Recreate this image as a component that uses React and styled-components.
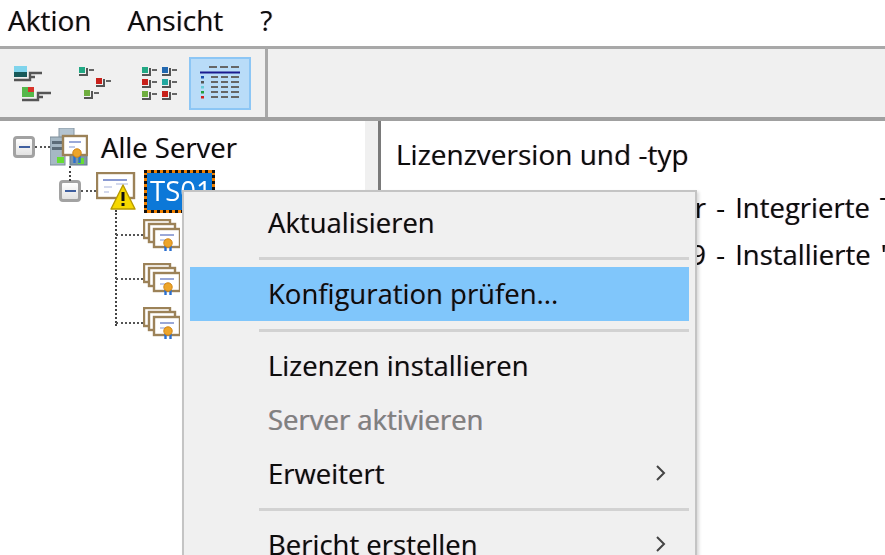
import React from "react";
import styled, { createGlobalStyle } from "styled-components";

const GlobalStyle = createGlobalStyle`
  html, body {
    margin: 0;
    height: 100%;
    overflow: hidden;
    background: #fff;
  }
  #root {
    height: 555px;
    filter: blur(0.55px);
  }
`;

const fringe = `text-shadow: -0.7px 0 rgba(255, 90, 0, 0.4), 0.7px 0 rgba(0, 110, 255, 0.4);`;

const Window = styled.div`
  position: relative;
  width: 885px;
  height: 555px;
  overflow: hidden;
  display: flex;
  flex-direction: column;
  font-family: "Open Sans", "Noto Sans", sans-serif;
  font-size: 27.5px;
  color: #0c0c0c;
`;

const MenuBar = styled.div`
  height: 49px;
  flex: none;
  box-sizing: border-box;
  display: flex;
  align-items: flex-start;
  padding-left: 8px;
  background: #fff;
  border-bottom: 3px solid #a8a8a8;
`;

const MenuTitle = styled.span`
  font-size: 28px;
  line-height: 41px;
  margin-right: ${(p) => p.$gap || 0}px;
  ${fringe}
`;

const Toolbar = styled.div`
  height: 72px;
  flex: none;
  box-sizing: border-box;
  display: flex;
  align-items: center;
  background: #f0f0f0;
  border-bottom: 4px solid #a0a0a0;
  padding-left: 13px;
`;

const ToolButton = styled.div`
  width: ${(p) => (p.$active ? "62px" : "42px")};
  height: 53px;
  margin-right: ${(p) => p.$gap || 0}px;
  box-sizing: border-box;
  display: flex;
  align-items: center;
  justify-content: center;
  background: ${(p) => (p.$active ? "#b9dcf8" : "transparent")};
  border: ${(p) => (p.$active ? "2px solid #8cc6f5" : "none")};
`;

const ToolDivider = styled.div`
  width: 3px;
  align-self: stretch;
  margin-left: 14px;
  background: #a8a8a8;
`;

const Panes = styled.div`
  flex: 1;
  display: flex;
  min-height: 0;
`;

const TreePane = styled.div`
  width: 365px;
  flex: none;
  box-sizing: border-box;
  padding-top: 4px;
  background: #fff;
`;

const Splitter = styled.div`
  width: 13px;
  flex: none;
  background: #f0f0f0;
`;

const DetailPane = styled.div`
  flex: 1;
  min-width: 0;
  box-sizing: border-box;
  background: #fff;
  border-left: 3px solid #7a7a7a;
  padding: 13px 0 0 15px;
  white-space: nowrap;
`;

const DetailHeading = styled.div`
  font-size: 28px;
  line-height: 40px;
  height: 40px;
  margin-bottom: 10px;
  ${fringe}
`;

const DetailRow = styled.div`
  display: flex;
  height: 47px;
  align-items: center;
  white-space: pre;
  word-spacing: 3px;
  ${fringe}
`;

const DetailName = styled.span`
  flex: 0 0 310px;
  text-align: right;
`;

const TreeRow = styled.div`
  position: relative;
  height: 44px;
  display: flex;
  align-items: center;
  padding-left: ${(p) => p.$indent}px;
`;

const Expander = styled.div`
  width: 22px;
  height: 22px;
  box-sizing: border-box;
  flex: none;
  border: 3px solid #a2a2a2;
  border-radius: 4px;
  background: linear-gradient(#fff, #e2e2e2);
  display: flex;
  align-items: center;
  justify-content: center;
  &::after {
    content: "";
    width: 11px;
    height: 2px;
    background: #3f5f9f;
  }
`;

const HDots = styled.div`
  width: ${(p) => p.$width}px;
  flex: none;
  border-top: 2px dotted #555;
`;

const VDots = styled.div`
  position: absolute;
  left: ${(p) => p.$left}px;
  top: ${(p) => p.$top}px;
  height: ${(p) => p.$height}px;
  border-left: 2px dotted #444;
`;

const TreeLabel = styled.span`
  margin-left: ${(p) => p.$gap}px;
  ${fringe}
`;

const SelectedLabel = styled.span`
  margin-left: 8px;
  width: 71px;
  height: 43px;
  box-sizing: border-box;
  line-height: 36px;
  padding-left: 3px;
  color: #fff;
  border: 3px dotted #111;
  background: linear-gradient(#0c78d8, #0c78d8) padding-box, #f08000 border-box;
`;

const ContextMenu = styled.div`
  position: absolute;
  left: 182px;
  top: 190px;
  width: 515px;
  box-sizing: border-box;
  padding: 4px 6px 0 6px;
  background: #f0f0f0;
  border: 2px solid #c4c4c4;
  box-shadow: 2px 2px 3px rgba(0, 0, 0, 0.15);
`;

const MenuRow = styled.div`
  height: 54px;
  display: flex;
  align-items: center;
  justify-content: space-between;
  box-sizing: border-box;
  padding: 0 22px 2px 78px;
  background: ${(p) => (p.$hot ? "#80c6fb" : "transparent")};
  color: ${(p) => (p.$disabled ? "#808080" : "#0c0c0c")};
  ${fringe}
`;

const MenuSeparator = styled.div`
  height: ${(p) => p.$height || 18}px;
  margin-left: 69px;
  display: flex;
  align-items: center;
  &::after {
    content: "";
    flex: 1;
    height: 3px;
    background: #d2d2d2;
  }
`;

const Node = ({ x, y, c }) => (
  <g>
    <rect x={x} y={y} width="6" height="6" fill={c} />
    <path d={`M${x} ${y + 8}h8v-7`} fill="none" stroke="#555" strokeWidth="2" />
    <path d={`M${x + 10} ${y + 3}h5`} fill="none" stroke="#666" strokeWidth="2" />
  </g>
);

const ViewTreeIcon = () => (
  <svg width="42" height="37" viewBox="0 0 42 37">
    <rect x="1" y="1" width="13" height="11" fill="#7fd4ec" />
    <rect x="1" y="7" width="13" height="5" fill="#175a5a" />
    <path d="M1 15h16v-7h12M17 8v4h5" fill="none" stroke="#555" strokeWidth="2.4" />
    <rect x="9" y="22" width="12" height="10" fill="#55b84a" />
    <rect x="15" y="22" width="6" height="5" fill="#d8342a" />
    <path d="M9 35h16v-7h13M25 28v4h5" fill="none" stroke="#555" strokeWidth="2.4" />
  </svg>
);

const ViewLicenseIcon = () => (
  <svg width="42" height="37" viewBox="0 0 42 37">
    <Node x={2} y={2} c="#22a884" />
    <Node x={19} y={13} c="#c8201a" />
    <Node x={7} y={25} c="#6fae3f" />
  </svg>
);

const ViewGridIcon = () => (
  <svg width="42" height="37" viewBox="0 0 42 37">
    <Node x={1} y={2} c="#22a884" />
    <Node x={21} y={2} c="#2268b0" />
    <Node x={1} y={14} c="#c8201a" />
    <Node x={21} y={14} c="#22a8a0" />
    <Node x={1} y={26} c="#6fae3f" />
    <Node x={21} y={26} c="#c8201a" />
  </svg>
);

const ViewListIcon = () => (
  <svg width="42" height="37" viewBox="0 0 42 37">
    <path d="M10 2h8M21 2h8M32 2h8" stroke="#666" strokeWidth="2" />
    <path d="M1 7.5h40" stroke="#1a1a90" strokeWidth="2" />
    <path
      d="M12 12h7M22 12h7M32 12h8M12 17h7M22 17h7M32 17h8M12 22h7M22 22h7M32 22h8M12 27h7M22 27h7M32 27h8M12 32h7M22 32h7M32 32h8"
      stroke="#666"
      strokeWidth="2"
    />
    <rect x="2" y="11" width="3" height="2.5" fill="#1a50b0" />
    <rect x="2" y="16" width="3" height="2.5" fill="#555" />
    <rect x="2" y="21" width="3" height="2.5" fill="#66ccd8" />
    <rect x="2" y="26" width="3" height="2.5" fill="#20a040" />
    <rect x="2" y="31" width="3" height="2.5" fill="#d02020" />
  </svg>
);

const Certificate = ({ x, y, w = 26, h = 18 }) => (
  <g>
    <rect x={x + 1} y={y + 1} width={w} height={h} fill="#fff" stroke="#9c8258" strokeWidth="2.4" />
    <path d={`M${x + 7} ${y + 7}h${w - 12}`} stroke="#6f83c8" strokeWidth="1.4" />
    <path d={`M${x + 7} ${y + 12}h6`} stroke="#9aa8d8" strokeWidth="1.2" />
  </g>
);

const Seal = ({ x, y }) => (
  <g>
    <path d={`M${x - 2.5} ${y + 3}v7M${x + 2.5} ${y + 3}v7`} stroke="#2a6fd0" strokeWidth="2.4" />
    <circle cx={x} cy={y} r="4.2" fill="#eda52a" stroke="#d08414" strokeWidth="1" />
  </g>
);

const ServerIcon = () => (
  <svg width="38" height="38" viewBox="0 0 38 38">
    <rect x="9" y="0" width="15" height="12" fill="#b4c4d0" stroke="#8898a4" />
    <rect x="0" y="9" width="15" height="28" fill="#a6b8c4" stroke="#7c8c98" />
    <rect x="2" y="13" width="11" height="3" fill="#5c6c78" />
    <rect x="2" y="19" width="11" height="3" fill="#5c6c78" />
    <rect x="7" y="29" width="7" height="6" fill="#66dd33" />
    <rect x="20" y="24" width="17" height="13" fill="#7f97a8" stroke="#65798a" />
    <rect x="28" y="30" width="6" height="6" fill="#66dd33" />
    <Certificate x={12} y={7} w={24} h={19} />
    <Seal x={27} y={25} />
  </svg>
);

const WarningCertIcon = () => (
  <svg width="40" height="38" viewBox="0 0 40 38">
    <rect x="1" y="1" width="37" height="25" fill="#fff" stroke="#9c8258" strokeWidth="2.4" />
    <path d="M7 8h24" stroke="#6f83c8" strokeWidth="1.6" />
    <path d="M8 15h8M8 20h5M20 12h12" stroke="#a8b4dc" strokeWidth="1.2" />
    <path d="M27 13L39 37H15Z" fill="#f6d800" stroke="#b89a00" strokeWidth="1.4" strokeLinejoin="round" />
    <rect x="25.5" y="20" width="3" height="9" fill="#111" />
    <rect x="25.5" y="31" width="3" height="3" fill="#111" />
  </svg>
);

const CertStackIcon = () => (
  <svg width="37" height="32" viewBox="0 0 37 32">
    <Certificate x={0} y={0} />
    <Certificate x={5} y={4} />
    <Certificate x={10} y={9} />
    <Seal x={25} y={24} />
  </svg>
);

const Chevron = () => (
  <svg width="12" height="18" viewBox="0 0 12 18">
    <path d="M2 2l7 7-7 7" fill="none" stroke="#444" strokeWidth="2" />
  </svg>
);

const LicenseNode = () => (
  <TreeRow $indent={116}>
    <HDots $width={27} />
    <CertStackIcon />
  </TreeRow>
);

const App = () => {
  return (
    <Window>
      <GlobalStyle />
      <MenuBar>
        <MenuTitle $gap={36}>Aktion</MenuTitle>
        <MenuTitle $gap={37}>Ansicht</MenuTitle>
        <MenuTitle>?</MenuTitle>
      </MenuBar>
      <Toolbar>
        <ToolButton $gap={22}><ViewTreeIcon /></ToolButton>
        <ToolButton $gap={22}><ViewLicenseIcon /></ToolButton>
        <ToolButton $gap={6}><ViewGridIcon /></ToolButton>
        <ToolButton $active><ViewListIcon /></ToolButton>
        <ToolDivider />
      </Toolbar>
      <Panes>
        <TreePane>
          <TreeRow $indent={13}>
            <Expander />
            <HDots $width={15} />
            <ServerIcon />
            <TreeLabel $gap={13}>Alle Server</TreeLabel>
          </TreeRow>
          <TreeRow $indent={59}>
            <VDots $left={69} $top={-3} $height={15} />
            <Expander />
            <HDots $width={15} />
            <WarningCertIcon />
            <SelectedLabel>TS01</SelectedLabel>
            <VDots $left={115} $top={41} $height={116} />
          </TreeRow>
          <LicenseNode />
          <LicenseNode />
          <LicenseNode />
        </TreePane>
        <Splitter />
        <DetailPane>
          <DetailHeading>Lizenzversion und -typ</DetailHeading>
          <DetailRow>
            <DetailName>Windows Server</DetailName> - Integrierte TS-Pro-Gerät-CAL
          </DetailRow>
          <DetailRow>
            <DetailName>Windows Server 2019</DetailName> - Installierte "RDS-Pro-Benutzer-CAL"
          </DetailRow>
        </DetailPane>
      </Panes>
      <ContextMenu>
        <MenuRow>Aktualisieren</MenuRow>
        <MenuSeparator $height={17} />
        <MenuRow $hot>Konfiguration prüfen...</MenuRow>
        <MenuSeparator />
        <MenuRow>Lizenzen installieren</MenuRow>
        <MenuRow $disabled>Server aktivieren</MenuRow>
        <MenuRow>Erweitert<Chevron /></MenuRow>
        <MenuSeparator $height={17} />
        <MenuRow>Bericht erstellen<Chevron /></MenuRow>
      </ContextMenu>
    </Window>
  );
};

export default App;
